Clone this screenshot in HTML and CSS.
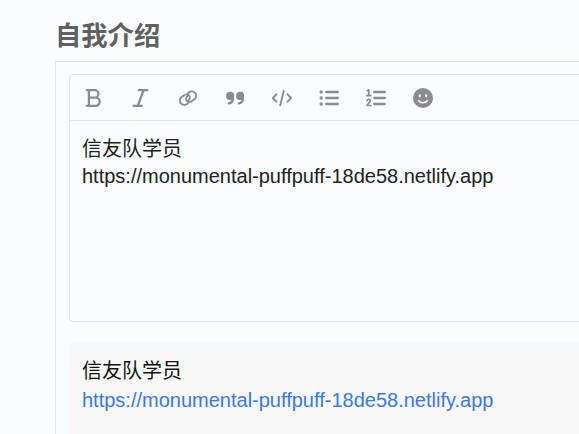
FILE: index.html
```html
<!DOCTYPE html>
<html lang="zh-CN">
<head>
<meta charset="utf-8">
<title>自我介绍</title>
<link rel="stylesheet" href="styles.css">
</head>
<body>
<main class="page">
  <h2 class="title">自我介绍</h2>
  <section class="panel">
    <div class="editor">
      <div class="toolbar">
        <svg class="icon" viewBox="0 0 24 24"><path class="line" d="M4.7 4.2h8a3.7 3.7 0 0 1 0 7.4H6.9M12.7 11.6h.9a4.1 4.1 0 0 1 0 8.2H4.7M6.9 4.2v15.6"/></svg>
        <svg class="icon" viewBox="0 0 24 24"><path class="line" d="M9.7 4.2h8.6M4.6 19.8h8.2M14.6 4.2L8.8 19.8"/></svg>
        <svg class="icon" viewBox="0 0 24 24"><g class="chain"><path d="M12.5 16.4a4.6 4.6 0 0 1-7.2 1.3c-2-1.6-1.9-4.5.1-6.4l1.9-1.6c1.9-1.7 4.6-1.7 5.9-.2 1.2 1.4.9 3.6-.9 5"/><path d="M11.5 7.9a4.6 4.6 0 0 1 7.2-1.3c2 1.6 1.9 4.5-.1 6.4l-1.9 1.6c-1.9 1.7-4.6 1.7-5.9.2-1.2-1.4-.9-3.6.9-5"/></g></svg>
        <svg class="icon" viewBox="0 0 24 24"><path id="quote" class="solid" d="M6.8 5.7H7.6a3.3 3.3 0 0 1 3.5 3.4v3.4c0 3.6-2.1 5.6-5.1 6.1-1.6.2-1.8-2-.2-2.4 1.5-.4 2.5-1.2 2.7-2.2H6.7a3.5 3.5 0 0 1-3.6-3.6V9.3a3.5 3.5 0 0 1 3.7-3.6z"/><use href="#quote" x="10"/></svg>
        <svg class="icon" viewBox="0 0 24 24"><path class="line thin" d="M6.4 8.3L2.9 12l3.5 3.7M17.6 8.3l3.5 3.7-3.5 3.7M13.8 4.8l-3.6 14.6"/></svg>
        <svg class="icon" viewBox="0 0 24 24"><path class="line" d="M9.2 6h11.6M9.2 12h11.6M9.2 18h11.6"/><g class="solid"><circle cx="4.2" cy="6" r="1.7"/><circle cx="4.2" cy="12" r="1.7"/><circle cx="4.2" cy="18" r="1.7"/></g></svg>
        <svg class="icon" viewBox="0 0 24 24"><path class="line" d="M10.2 6h10.6M10.2 12h10.6M10.2 18h10.6"/><path class="line digit" d="M3.2 4.7l1.6-.9v5.7M2.8 9.7h4M3 14.6c.4-1.6 3.4-1.5 3.4.2 0 1.5-3 2.5-3.4 4.7h3.8"/></svg>
        <svg class="icon" viewBox="0 0 24 24"><circle class="solid" cx="12" cy="12" r="10"/><g class="face"><ellipse cx="8.8" cy="9.7" rx="1.1" ry="1.5"/><ellipse cx="15.2" cy="9.7" rx="1.1" ry="1.5"/></g><path class="smile" d="M7.7 14.8c2 2.6 6.6 2.6 8.6 0"/></svg>
      </div>
      <div class="content"><p class="intro">信友队学员</p><p>https://monumental-puffpuff-18de58.netlify.app</p></div>
    </div>
    <div class="preview"><p class="intro">信友队学员</p><p><a class="link">https://monumental-puffpuff-18de58.netlify.app</a></p></div>
  </section>
</main>
</body>
</html>
```
FILE: styles.css
```css
* { box-sizing: border-box; }
body {
  margin: 0;
  height: 434px;
  overflow: hidden;
  background: #f9fcff;
  color: #222;
  font: 20px/28px "Liberation Sans", "Noto Sans CJK SC", sans-serif;
}
p { margin: 0; }
.intro { padding-top: 1px; margin-bottom: -1px; }
.page { height: 434px; padding: 16px 0 0 55px; overflow: hidden; }
.title {
  margin: 0;
  height: 45px;
  color: #606060;
  font-size: 26.3px;
  line-height: 40px;
  font-weight: 700;
}
.panel {
  height: 373px;
  padding: 12px 0 0 13px;
  border: 1px solid #e3e6ea;
  border-width: 1px 0 0 1px;
}
.editor {
  height: 248px;
  border: 1px solid #e1e5e9;
  border-right: 0;
  border-radius: 5px 0 0 5px;
}
.toolbar {
  display: flex;
  align-items: center;
  gap: 23px;
  height: 46px;
  padding-left: 12px;
  border-bottom: 1px solid #e1e5e9;
}
.icon { width: 24px; height: 24px; }
.line, .chain {
  fill: none;
  stroke: #8c8c8c;
  stroke-width: 2.3;
  stroke-linecap: round;
  stroke-linejoin: round;
}
.chain { stroke-width: 1.9; }
.thin { stroke-width: 1.9; }
.digit { stroke-width: 1.7; }
.solid { fill: #8c8c8c; }
.face { fill: #f9fcff; }
.smile { fill: none; stroke: #f9fcff; stroke-width: 1.6; stroke-linecap: round; }
.content { padding: 13px 12px; }
.preview {
  height: 92px;
  margin-top: 20px;
  padding: 13px 12px 0 13px;
  background: #f8f8f8;
  color: #111;
  line-height: 30px;
}
.link { color: #3b78e7; }
```
